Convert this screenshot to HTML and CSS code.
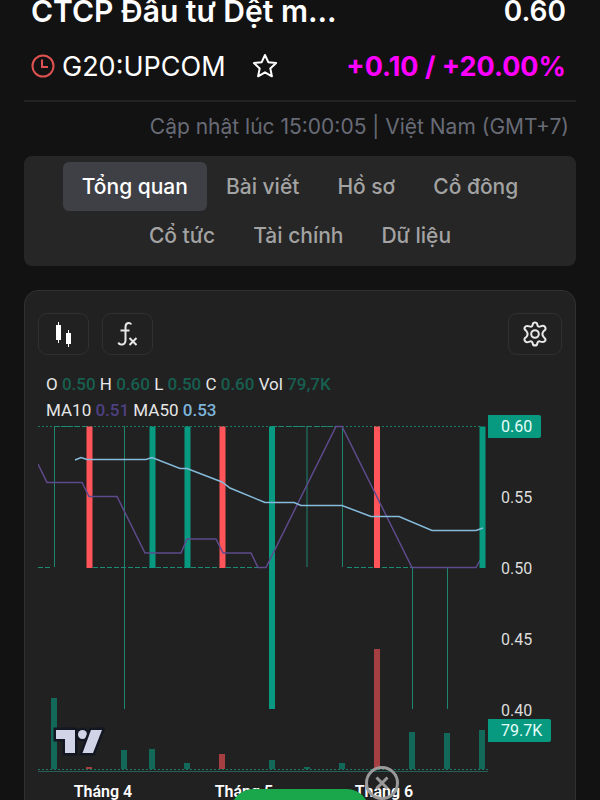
FILE: index.html
```
<!DOCTYPE html>
<html lang="vi">
<head>
	<meta charset="utf-8" />
	<meta name="viewport" content="width=device-width, initial-scale=1.0">
	<title>G20:UPCOM</title>
	<link rel="stylesheet" href="styles.css">
</head>
<body>

	<div class="page">
		<header class="stock-head">
			<div class="row name-row">
				<h1>CTCP Đầu tư Dệt m...</h1>
				<div class="price">0.60</div>
			</div>
			<div class="row code-row">
				<div class="code">
					<svg class="ic-clock" viewBox="0 0 24 24"><circle cx="12" cy="12" r="10.5"/><path d="M11 5.500v7.500h6"/></svg>
					<span>G20:UPCOM</span>
					<button type="button" class="btn-star" aria-label="Theo dõi">
						<svg viewBox="0 0 26 26"><path d="M13 2l3.300 7.200 7.800.9-5.800 5.300 1.600 7.900-6.900-4-6.900 4 1.600-7.900-5.800-5.300 7.800-.9z"/></svg>
					</button>
				</div>
				<div class="change">+0.10 / +20.00%</div>
			</div>
		</header>

		<div class="updated">Cập nhật lúc 15:00:05 | Việt Nam (GMT+7)</div>

		<nav class="tabs">
			<a href="#" class="active">Tổng quan</a>
			<a href="#">Bài viết</a>
			<a href="#">Hồ sơ</a>
			<a href="#">Cổ đông</a>
			<a href="#">Cổ tức</a>
			<a href="#">Tài chính</a>
			<a href="#">Dữ liệu</a>
		</nav>

		<section class="card">
			<div class="toolbar">
				<button type="button" aria-label="Kiểu biểu đồ">
					<svg viewBox="0 0 28 28"><path class="fill" d="M6 5h2V2h1v3h2v15H9v3H8v-3H6zM16 13h2v-3h1v3h2v11h-2v3h-1v-3h-2z"/></svg>
				</button>
				<button type="button" aria-label="Chỉ báo">
					<svg viewBox="0 0 28 28"><path d="M17 4.500c0-2-5.500-3-5.500 2.500v13c0 6-6.500 5-7 2.500M6.500 10.500h9M15.500 18l7 7M22.500 18l-7 7"/></svg>
				</button>
				<button type="button" class="btn-setting" aria-label="Cài đặt">
					<svg viewBox="0 0 28 28"><path d="M11.700 4.500Q12 2.500 14 2.500T16.300 4.500Q16.700 7.500 19.500 6.400Q23 4.800 24.200 7.200T22.800 10.800Q20 14 22.800 17.200Q25.300 19 24.200 20.800T19.500 21.600Q16.700 20.500 16.300 23.500Q16 25.500 14 25.500T11.700 23.500Q11.300 20.500 8.500 21.600Q5 23.200 3.800 20.800T5.200 17.200Q8 14 5.200 10.800Q2.700 9 3.800 7.200T8.500 6.400Q11.300 7.500 11.700 4.500z"/><circle cx="14" cy="14" r="3.800"/></svg>
				</button>
			</div>

			<div class="legend">
				<div>O <b>0.50</b> H <b>0.60</b> L <b>0.50</b> C <b>0.60</b> Vol <b>79,7K</b></div>
				<div>MA10 <b class="ma10">0.51</b> MA50 <b class="ma50">0.53</b></div>
			</div>

			<div class="chart">
				<div class="plot">
					<svg class="series" viewBox="0 0 450 358" preserveAspectRatio="none">
						<!-- volume -->
						<path class="vol up" d="M16 354V283M86 354V335M114 354V334M149 354V348M234 354V345M269 354V352M304 354V348M374 354V317M409 354V318M444 354V315"/>
						<path class="vol down" d="M51 354V352M184 354V339M339 354V234"/>
						<path class="dots" d="M0 354.500H450"/>
						<path class="base" d="M0 356.500H450"/>

						<!-- price -->
						<path class="dots" d="M0 11.500H444"/>
						<path class="dash" d="M16 11.500H51M234 11.500H304M0 152.500H12M55 152.500H226M309 152.500H374"/>
						<path class="wick" d="M16.500 11V152M86.500 11V294M269 11V152M304.500 11V152M374.500 152V294M409.500 152V294"/>
						<path class="candle up" d="M114.500 11.500V153M149.500 11.500V153M234 11.500V294"/>
						<path class="candle down" d="M51.500 11.500V153M184.500 11.500V153M339 11.500V153"/>

						<polyline class="line-ma10" points="0,49 9,67.500 44,67.500 51,81.500 79,81.500 107,138 143,138 149,124 178,124 185,138 213,138 220,152.500 228,152.500 298,11.500 304,11.500 374,152.500 438,152.500 444,142"/>
						<path class="candle up" d="M444.500 11.500V153"/>
						<polyline class="line-ma50" points="37,45 43,42.500 49,44.500 108,44.500 114,42.500 142,53.500 149,53.500 184,67 192,73 227,87.500 256,87.500 263,90.500 304,90.500 333,101.500 361,101.500 394,115.500 438,115.500 445,113"/>
					</svg>
					<svg class="tv-logo" viewBox="0 0 52 30"><g><path d="M3 3h19v23h-10v-14h-9z"/><circle cx="29.500" cy="7.500" r="4.500"/><path d="M38 3h11l-9 23h-10.500z"/></g></svg>
				</div>
				<div class="axis">
					<span class="tag">0.60</span>
					<span>0.55</span>
					<span>0.50</span>
					<span>0.45</span>
					<span>0.40</span>
					<span class="tag vol-tag">79.7K</span>
				</div>
				<div class="months">
					<span>Tháng 4</span>
					<span>Tháng 5</span>
					<span>Tháng 6</span>
				</div>
			</div>
		</section>
	</div>

	<div class="bottom-pop">
		<button type="button" class="btn-close" aria-label="Đóng">
			<svg viewBox="0 0 34 34"><circle cx="17" cy="17" r="15.500"/><path d="M11.500 11.500l11 11M22.500 11.500l-11 11"/></svg>
		</button>
		<button type="button" class="btn-green" aria-label="Mở"></button>
	</div>

</body>
</html>
```
FILE: styles.css
```
/* global */
	*,
	:after,
	:before {
		box-sizing: border-box;
	}
	body {
		margin: 0;
		background: #121212;
		color: #fff;
		font-family: "Inter", "Liberation Sans", sans-serif;
	}
	a {color:inherit;text-decoration:none;}
	button {
		padding: 0;
		border: 0;
		background: none;
		color: inherit;
		cursor: pointer;
	}
	svg {display:block;fill:none;}

	.page {height:100vh;padding:0 24px;overflow:hidden;}

/* stock head */
	.stock-head {padding-bottom:17px;border-bottom:2px solid #222;}
	.row {display:flex;justify-content:space-between;align-items:center;padding:0 10px 0 7px;font-size:27px;}
	.name-row {height:22px;line-height:22px;}
	.name-row h1 {margin:0;font-size:30px;font-weight:600;white-space:nowrap;}
	.price {font-size:28px;font-weight:600;}
	.code-row {height:34px;margin-top:27px;}
	.code {display:flex;align-items:center;}
	.ic-clock {width:24px;height:24px;margin-right:7px;stroke:#e05252;stroke-width:2;}
	.btn-star {margin-left:26px;}
	.btn-star svg {width:26px;height:26px;stroke:#fff;stroke-width:2;stroke-linejoin:round;}
	.change {color:#f0f;font-weight:700;}

	.updated {
		padding: 9px 7px 13px;
		color: #686b76;
		font-size: 21px;
		line-height: 32px;
		text-align: right;
	}

/* tabs */
	.tabs {
		display: flex;
		flex-wrap: wrap;
		justify-content: center;
		padding: 6px 24px;
		border-radius: 8px;
		background: #262626;
		color: #a3a3a3;
		font-size: 21px;
		font-weight: 500;
		line-height: 49px;
	}
	.tabs a {padding:0 19px;border-radius:6px;}
	.tabs a.active {background:#3f4046;color:#fff;}

/* chart card */
	.card {
		margin-top: 24px;
		padding: 22px 13px 24px;
		border: 1px solid #303030;
		border-radius: 14px;
		background: #212121;
		font-family: "Roboto", "Liberation Sans", sans-serif;
	}
	.toolbar {display:flex;gap:13px;}
	.toolbar button {
		display: flex;
		align-items: center;
		justify-content: center;
		width: 51px;
		height: 42px;
		border: 1px solid #303030;
		border-radius: 9px;
	}
	.toolbar .btn-setting {width:54px;margin-left:auto;}
	.toolbar svg {width:28px;height:28px;stroke:#e8e8e8;stroke-width:2;}
	.toolbar .fill {fill:#fff;stroke:none;}

	.legend {padding:16px 8px 0;color:#e6e6e6;font-size:17px;line-height:26px;}
	.legend > div {height:26px;white-space:nowrap;}
	.legend b {color:#175f50;font-weight:500;}
	.legend b.ma10 {color:#4f4082;}
	.legend b.ma50 {color:#7db4dc;}

	.chart {display:grid;grid-template-columns:1fr 74px;margin-top:-8px;}
	.plot {position:relative;}
	.series {width:100%;height:358px;}
	.series .up {stroke:#089981;}
	.series .down {stroke:#ff5459;}
	.vol {stroke-width:6;opacity:.6;}
	.candle {stroke-width:6;}
	.wick {stroke:#1d8570;stroke-width:1;}
	.dots {stroke:#1d7a68;stroke-width:1;stroke-dasharray:2 2;}
	.dash {stroke:#1d8a74;stroke-width:1;stroke-dasharray:5 2;}
	.base {stroke:#285f57;stroke-width:1;}
	.line-ma10 {stroke:#5e4a8c;stroke-width:1.500;}
	.line-ma50 {stroke:#86bbdc;stroke-width:1.500;}
	.tv-logo {position:absolute;left:15px;bottom:16px;width:52px;height:30px;}
	.tv-logo g {fill:#d1d4e6;stroke:#131722;stroke-width:5;paint-order:stroke;}

	.axis {
		display: grid;
		grid-template-rows: repeat(4, 71px) 20px 23px;
		align-items: start;
		justify-items: start;
		align-content: start;
		color: #dcdcdc;
		font-size: 16px;
		line-height: 23px;
	}
	.axis span {padding:0 9px 0 13px;}
	.axis .tag {border-radius:0 2px 2px 0;background:#089981;color:#e4fff9;}

	.months {
		display: grid;
		grid-template-columns: 130fr 152fr 128fr 40fr;
		padding-top: 8px;
		color: #fff;
		font-size: 16px;
		font-weight: 600;
		line-height: 22px;
		text-align: center;
	}

/* bottom popup */
	.bottom-pop {
		position: fixed;
		right: 0;
		bottom: -33px;
		left: 0;
		display: flex;
		justify-content: center;
	}
	.btn-green {width:138px;height:44px;border-radius:22px;background:#1aa64a;}
	.btn-close {position:absolute;bottom:33px;left:50%;margin-left:65px;}
	.btn-close svg {width:34px;height:34px;stroke:#9a9a9a;stroke-width:3;}
```
